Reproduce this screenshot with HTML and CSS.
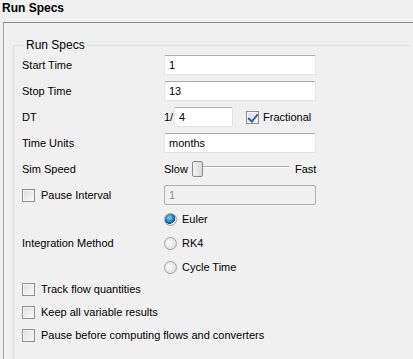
FILE: index.html
```html
<!DOCTYPE html>
<html lang="en">
<head>
    <meta charset="UTF-8">
    <title>Run Specs</title>
    <link rel="stylesheet" href="styles.css">
</head>
<body>
    <div class="title">Run Specs</div>

    <div class="panel">
        <fieldset class="group">
            <legend>Run Specs</legend>

            <div class="row">
                <span class="label">Start Time</span>
                <span class="field">1</span>
            </div>
            <div class="row">
                <span class="label">Stop Time</span>
                <span class="field">13</span>
            </div>
            <div class="row">
                <span class="label">DT</span>
                <span class="frac">1/</span>
                <span class="field small">4</span>
                <span class="check checked dt-check"></span>
                <span>Fractional</span>
            </div>
            <div class="row">
                <span class="label">Time Units</span>
                <span class="field">months</span>
            </div>
            <div class="row">
                <span class="label">Sim Speed</span>
                <span class="slow">Slow</span>
                <span class="slider"><span class="thumb"></span></span>
                <span>Fast</span>
            </div>
            <div class="row">
                <span class="label"><span class="check"></span>Pause Interval</span>
                <span class="field disabled">1</span>
            </div>

            <div class="method">
                <span class="label">Integration Method</span>
                <div class="radios">
                    <div class="opt"><span class="radio on"></span>Euler</div>
                    <div class="opt"><span class="radio"></span>RK4</div>
                    <div class="opt"><span class="radio"></span>Cycle Time</div>
                </div>
            </div>

            <div class="options">
                <div class="opt"><span class="check"></span>Track flow quantities</div>
                <div class="opt"><span class="check"></span>Keep all variable results</div>
                <div class="opt"><span class="check"></span>Pause before computing flows and converters</div>
            </div>
        </fieldset>
    </div>
</body>
</html>
```

FILE: styles.css
```css
body {
    margin: 0;
    background-color: #f0f0f0;
    font-family: "Liberation Sans", Arial, sans-serif;
    font-size: 11px;
    color: #000;
    overflow: hidden;
    height: 359px;
}
.title {
    height: 22px;
    line-height: 17px;
    padding-left: 2px;
    font-size: 12px;
    font-weight: bold;
}
.panel {
    box-sizing: border-box;
    margin-left: 3px;
    height: 337px;
    border-top: 1px solid #828a90;
    border-left: 1px solid #a0a0a0;
    padding: 15px 0 0 9px;
}
.group {
    box-sizing: border-box;
    margin: 0;
    width: 397px;
    height: 321px;
    border: 1px solid #d5dfe5;
    border-right: none;
    border-bottom: none;
    border-radius: 3px 0 0 0;
    padding: 3px 0 0 8px;
}
.group legend {
    padding: 0 2px;
    margin-left: 2px;
    font-size: 12px;
}
.row {
    display: flex;
    align-items: center;
    height: 20px;
    margin-bottom: 6px;
}
.label {
    display: flex;
    align-items: center;
    width: 142px;
    flex-shrink: 0;
}
.field {
    box-sizing: border-box;
    width: 152px;
    height: 20px;
    line-height: 18px;
    padding-left: 4px;
    background-color: #fff;
    border: 1px solid #e2e3ea;
    border-top-color: #abadb3;
    border-radius: 2px;
}
.field.small {
    width: 59px;
    margin-right: 13px;
}
.field.disabled {
    background-color: #f0f0f0;
    border-color: #adb2b5;
    color: #8d8d8d;
}
.frac {
    width: 10px;
}
.slow {
    width: 28px;
}
.check {
    box-sizing: border-box;
    display: inline-block;
    width: 13px;
    height: 13px;
    margin-right: 6px;
    border: 1px solid #8f8f8f;
    background: linear-gradient(135deg, #dcdcdc, #fbfbfb);
    box-shadow: inset 0 0 0 1px #f4f4f4;
    position: relative;
}
.check.dt-check {
    margin-right: 4px;
}
.check.checked::after {
    content: "";
    position: absolute;
    left: 3px;
    top: 0px;
    width: 4px;
    height: 8px;
    border: solid #3c5ba8;
    border-width: 0 2px 2px 0;
    transform: rotate(40deg);
}
.slider {
    position: relative;
    width: 97px;
    height: 20px;
    margin-right: 6px;
}
.slider::before {
    content: "";
    position: absolute;
    left: 2px;
    right: 0;
    top: 7px;
    border-top: 1px solid #b0b0b0;
    border-bottom: 1px solid #fff;
}
.thumb {
    position: absolute;
    left: 0;
    top: 2px;
    box-sizing: border-box;
    width: 11px;
    height: 16px;
    border: 1px solid #8a8a8a;
    border-radius: 2px;
    background: linear-gradient(to right, #f4f4f4, #d8d8d8);
}
.method {
    display: flex;
    align-items: center;
}
.radios {
    display: flex;
    flex-direction: column;
    gap: 8px;
}
.opt {
    display: flex;
    align-items: center;
    height: 16px;
}
.radio {
    box-sizing: border-box;
    display: inline-block;
    width: 13px;
    height: 13px;
    margin-right: 5px;
    border-radius: 50%;
    border: 1px solid #a0a0a0;
    background: radial-gradient(circle at 40% 40%, #fdfdfd, #d6d6d6);
}
.radio.on {
    background: radial-gradient(circle at 40% 35%, #8fd0f3 0, #1d7bb8 45%, #0f4f7e 60%, #e8e8e8 62%);
}
.options {
    display: flex;
    flex-direction: column;
    gap: 7px;
    margin-top: 6px;
}
```
